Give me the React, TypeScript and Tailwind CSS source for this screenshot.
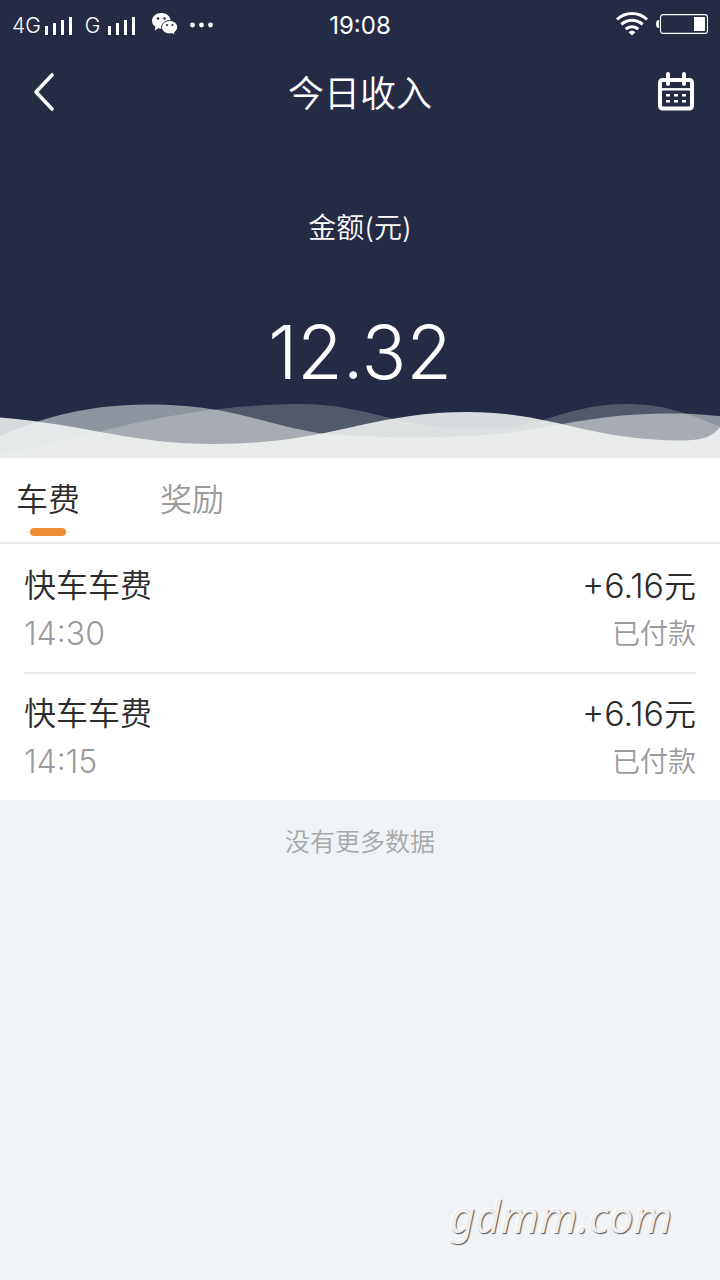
const trips = [
  { id: 1, title: "快车车费", time: "14:30", amount: "+6.16", status: "已付款" },
  { id: 2, title: "快车车费", time: "14:15", amount: "+6.16", status: "已付款" },
];

function Signal() {
  return (
    <svg className="h-6 w-7" viewBox="0 0 28 24" fill="currentColor" aria-hidden="true">
      <path d="M0 14h3v9H0zM8 11h3v12H8zM16 8h3v15h-3zM24 5h3v18h-3z" />
    </svg>
  );
}

function WeChat() {
  return (
    <svg className="h-[22px] w-[26px]" viewBox="0 0 26 22" aria-hidden="true">
      <path
        fill="#fff"
        d="M9.3 0C4.2 0 0 3.4 0 7.8c0 2.5 1.4 4.6 3.4 6L2.7 17.8l3.5-2.5c1 .3 2 .4 3.1.4 5.2 0 9.3-3.5 9.3-7.9S14.5 0 9.3 0z"
      />
      <path
        fill="#fff"
        stroke="#252b45"
        strokeWidth="1"
        d="M17.6 7.5c-4.5 0-8 3-8 6.7s3.5 6.7 8 6.7c.9 0 1.7-.1 2.5-.3l3 1.4-.6-2.7c1.9-1.2 3.1-3 3.1-5.1 0-3.7-3.6-6.700-8-6.700z"
      />
      <g fill="#252b45">
        <circle cx="6" cy="5.500" r="1.300" />
        <circle cx="12.500" cy="5.500" r="1.300" />
        <circle cx="15" cy="12" r="1.100" />
        <circle cx="20.500" cy="12" r="1.100" />
      </g>
    </svg>
  );
}

function Wifi() {
  return (
    <svg className="h-6 w-8" viewBox="0 0 32 24" fill="none" stroke="#fff" strokeWidth="3" aria-hidden="true">
      <path d="M1 7.500C9.600-.4 22.400-.4 31 7.500M5.300 12.400c6.200-5.600 15.200-5.600 21.400 0M9.700 17.100c3.700-3.200 8.900-3.200 12.600 0" />
      <path fill="#fff" stroke="none" d="M12.600 20.200c2-1.800 4.800-1.800 6.800 0L16 23.500z" />
    </svg>
  );
}

function Battery() {
  return (
    <svg className="h-5 w-[52px]" viewBox="0 0 52 20" aria-hidden="true">
      <path fill="#fff" d="M3 6v8C1 14 0 12.500 0 10s1-4 3-4z" />
      <rect x="4.500" y=".6" width="47" height="18.800" rx="2.500" fill="none" stroke="#fff" strokeWidth="1.200" />
      <path fill="#fff" d="M38 3h11v14H38z" />
    </svg>
  );
}

function Calendar() {
  return (
    <svg className="h-10 w-9" viewBox="0 0 36 40" fill="none" stroke="#fff" aria-hidden="true">
      <rect x="2" y="8" width="32" height="28.500" rx="2.500" strokeWidth="4" />
      <path d="M10 2v10M26 2v10" strokeWidth="4" strokeLinecap="round" />
      <path d="M2 17.300h32" strokeWidth="2.400" />
      <path d="M8 23.200h4M16 23.200h4M24 23.200h4M8 29.200h4M16 29.200h4M24 29.200h4" strokeWidth="2.400" />
    </svg>
  );
}

function Waves() {
  return (
    <svg className="block h-[58px] w-full" viewBox="0 0 720 58" preserveAspectRatio="none" aria-hidden="true">
      <path
        fill="#f4fff4"
        fillOpacity=".22"
        d="M0 55C40 48 70 38 110 29C170 14 240 4 300 4C335 4 362 11 390 18C430 30 490 31 520 26C550 20 580 4 625 4C665 4 690 14 720 27V58H0z"
      />
      <path
        fill="#fafffa"
        fillOpacity=".5"
        d="M0 36C45 16 90 5 145 4.500C230 4 260 24 325 34C400 39 440 38 500 34C560 26 600 14 665 13.500C690 13 705 15 720 16V58H0z"
      />
      <path
        fill="#f2f6f4"
        fillOpacity=".87"
        d="M0 17.500C90 25 130 44 215 44C330 44 370 12 468 12C550 12 590 40.500 680 40.500C704 40.500 713 36 720 27V58H0z"
      />
    </svg>
  );
}

export default function App() {
  return (
    <div className="flex min-h-screen flex-col bg-[#eff3f6] font-['Inter','Noto_Sans_CJK_SC',sans-serif] font-[350]">
      <header className="bg-[#252b45] text-white">
        <div className="grid h-12 grid-cols-3 items-center px-3">
          <div className="flex items-center">
            <span className="mr-1 pt-1 text-[21px]">4G</span>
            <Signal />
            <span className="mr-2 ml-3 pt-1 text-[21px]">G</span>
            <Signal />
            <span className="ml-4">
              <WeChat />
            </span>
            <svg className="ml-3 h-5 w-6" viewBox="0 0 24 20" fill="#fff" aria-hidden="true">
              <circle cx="2.500" cy="11" r="2.400" />
              <circle cx="11.500" cy="11" r="2.400" />
              <circle cx="20.500" cy="11" r="2.400" />
            </svg>
          </div>
          <time className="pt-1 text-center text-2xl font-normal">19:08</time>
          <div className="flex items-center justify-end gap-2">
            <Wifi />
            <Battery />
          </div>
        </div>

        <nav className="flex h-[88px] items-center justify-between px-6">
          <button type="button" aria-label="返回" className="flex w-10 justify-center">
            <svg className="h-10 w-6" viewBox="0 0 24 40" fill="none" stroke="#fff" strokeWidth="3.600" strokeLinecap="round" strokeLinejoin="round" aria-hidden="true">
              <path d="M20 3L4 20l16 17" />
            </svg>
          </button>
          <h1 className="pt-1 text-4xl font-[350]">今日收入</h1>
          <button type="button" aria-label="选择日期" className="flex w-10 justify-center">
            <Calendar />
          </button>
        </nav>

        <div className="flex flex-col items-center pt-[72px]">
          <p className="text-[28px] leading-10">金额(元)</p>
          <p className="mt-16 text-[74px] leading-[80px]">12.32</p>
        </div>
        <div className="pt-2">
          <Waves />
        </div>
      </header>

      <main>
        <div role="tablist" className="flex h-[86px] items-start gap-20 border-b-2 border-[#e6e7e8] bg-white px-4 pt-[22px]">
          <button type="button" role="tab" aria-selected="true" className="flex flex-col items-center text-[32px] leading-10 text-[#2c2c2c]">
            车费
            <span className="mt-2 h-2 w-9 rounded-sm bg-[#f28d38]" />
          </button>
          <button type="button" role="tab" aria-selected="false" className="text-[32px] leading-10 text-[#9a9a9a]">
            奖励
          </button>
        </div>

        <ul className="bg-white px-6">
          {trips.map((trip) => (
            <li key={trip.id} className="border-t-2 border-[#e6e7e8] pt-[18px] pb-4 first:border-transparent">
              <div className="flex h-11 justify-between text-[32px] leading-[44px] text-[#2c2c2c]">
                <span>{trip.title}</span>
                <span>
                  <span className="text-[34px]">{trip.amount}</span>元
                </span>
              </div>
              <div className="flex items-center justify-between pt-1 leading-[44px] text-[#9a9a9a]">
                <time className="text-[32px]">{trip.time}</time>
                <span className="text-[28px]">{trip.status}</span>
              </div>
            </li>
          ))}
        </ul>

        <p className="pt-6 text-center text-[25px] leading-9 text-[#a6a8aa]">没有更多数据</p>
      </main>

      <footer className="mt-auto flex justify-end pr-12 pb-8">
        <span className="font-['Noto_Sans',sans-serif] text-[44px] leading-[64px] font-normal text-[#eeeeee] italic [text-shadow:1px_1px_1px_#555,-1px_-1px_1px_#fff]">
          gdmm.com
        </span>
      </footer>
    </div>
  );
}
